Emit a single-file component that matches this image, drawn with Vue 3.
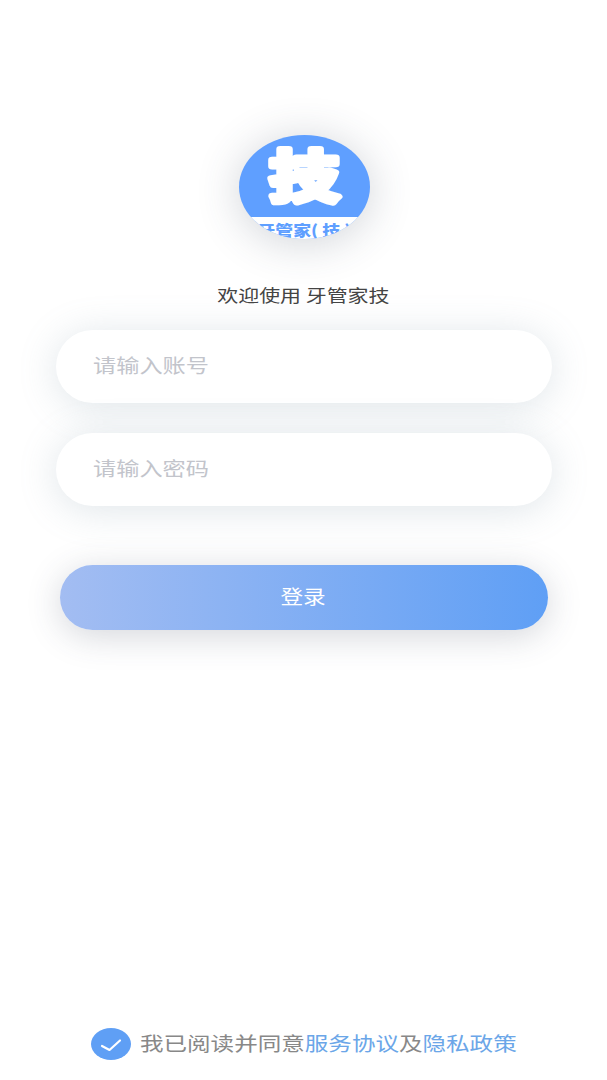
<template>
  <div class="login">
    <div class="logo">
      <svg class="logo-char" width="131" height="82" viewBox="0 0 131 82">
        <text transform="translate(65.5 62) scale(1.25 1)" text-anchor="middle">技</text>
      </svg>
      <div class="logo-strip"><span>牙管家( 技 )</span></div>
    </div>
    <p class="welcome"><span>欢迎使用 牙管家技</span></p>

    <div class="field"><span class="placeholder">请输入账号</span></div>
    <div class="field second"><span class="placeholder">请输入密码</span></div>

    <button class="submit"><span>登录</span></button>

    <div class="agree">
      <span class="check">
        <svg width="40" height="32" viewBox="0 0 40 32">
          <path d="M11 18 L18.5 22 L29 12.5" fill="none" stroke="#fff" stroke-width="2.2" stroke-linecap="round" stroke-linejoin="round" />
        </svg>
      </span>
      <span class="agree-text">我已阅读并同意<a>服务协议</a>及<a>隐私政策</a></span>
    </div>
  </div>
</template>

<script setup>
</script>

<style>
html, body {
  background: #fff;
}
</style>

<style scoped>
.login {
  height: 1080px;
  overflow: hidden;
  box-sizing: border-box;
  padding-top: 135px;
  display: flex;
  flex-direction: column;
  align-items: center;
  font-family: "Noto Sans CJK SC", "Noto Sans", sans-serif;
  background: #fff;
}

.logo {
  width: 131px;
  height: 104px;
  margin-left: 1px;
  border-radius: 50%;
  overflow: hidden;
  background: #5f9fff;
  display: flex;
  flex-direction: column;
  align-items: center;
  box-shadow: 0 4px 44px rgba(60, 70, 90, 0.24);
  flex-shrink: 0;
}
.logo-char {
  flex-shrink: 0;
  display: block;
}
.logo-char text {
  font-size: 56px;
  font-weight: 700;
  fill: #fff;
  stroke: #fff;
  stroke-width: 6.5px;
  stroke-linejoin: round;
}
.logo-strip {
  width: 100%;
  flex: 1;
  background: #fff;
  text-align: center;
  white-space: nowrap;
  overflow: hidden;
}
.logo-strip span {
  display: inline-block;
  font-size: 15px;
  line-height: 19px;
  font-weight: 900;
  color: #5f9fff;
  white-space: pre;
  margin-top: -2px;
  transform: scaleX(1.19);
}

/* the whole reference is stretched sideways, so the text gets the same scaleX */
.welcome {
  margin: 45px 0 0;
  line-height: 22px;
  color: #444;
}
.welcome span {
  display: inline-block;
  font-size: 17.6px;
  transform: scaleX(1.19);
}

.field {
  width: 496px;
  height: 73px;
  margin-top: 24px;
  border-radius: 37px;
  background: #fff;
  box-sizing: border-box;
  padding-left: 37px;
  display: flex;
  align-items: center;
  box-shadow: 0 4px 38px rgba(120, 145, 165, 0.24);
  flex-shrink: 0;
}
.second {
  margin-top: 30px;
}
.placeholder {
  display: inline-block;
  font-size: 19.5px;
  color: #c2c4cb;
  margin-top: -5px;
  transform: scaleX(1.19);
  transform-origin: left center;
}

.submit {
  width: 488px;
  height: 65px;
  margin-top: 59px;
  border: 0;
  border-radius: 33px;
  background: linear-gradient(90deg, #a3bdf2, #5f9ff5);
  color: #fff;
  font-family: inherit;
  padding: 0 0 5px;
  box-shadow: 0 6px 34px rgba(60, 70, 90, 0.22);
  flex-shrink: 0;
}
.submit span {
  display: inline-block;
  font-size: 19px;
  transform: scaleX(1.19);
}

.agree {
  margin-top: 398px;
  width: 426px;
  display: flex;
  align-items: center;
  gap: 9px;
}
.check {
  width: 40px;
  height: 32px;
  border-radius: 50%;
  background: #5f9ff5;
  display: flex;
  align-items: center;
  justify-content: center;
  flex-shrink: 0;
}
.agree-text {
  display: inline-block;
  font-size: 19.8px;
  line-height: 30px;
  color: #888;
  white-space: nowrap;
  margin-top: -2px;
  transform: scaleX(1.19);
  transform-origin: left center;
}
.agree-text a {
  color: #6ba6e8;
}
</style>
